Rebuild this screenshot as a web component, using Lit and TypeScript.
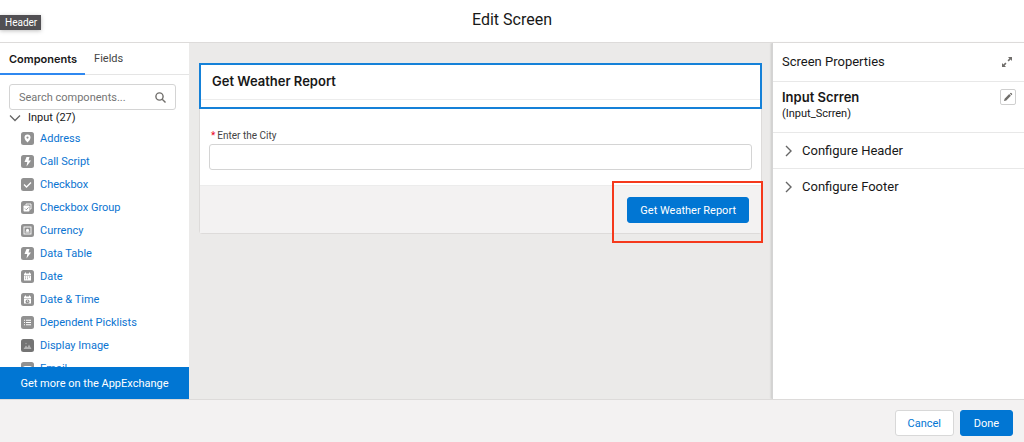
import { LitElement, html, svg, css } from "lit";
import { customElement, property, state } from "lit/decorators.js";

const glyphs: Record<string, unknown> = {
  pin: svg`<path fill-rule="evenodd" fill="#fff" d="M13 5a6 6 0 0 0-6 6c0 4 4 8 6 10 2-2 6-6 6-10a6 6 0 0 0-6-6Zm0 4a2.200 2.200 0 1 1 0 4.400 2.200 2.200 0 0 1 0-4.400Z"/>`,
  bolt: svg`<path fill="#fff" d="M11 4h6l-2 7h5l-9 12 1.500-9H7Z"/>`,
  check: svg`<path fill="none" stroke="#fff" stroke-width="2.600" d="m6 13 5 5 9-9"/>`,
  group: svg`<path fill="none" stroke="#fff" stroke-width="1.800" d="M10 8V6h10v10h-2"/><rect x="5" y="9" width="12" height="12" rx="1.500" fill="#fff"/><path fill="none" stroke="#919191" stroke-width="1.800" d="m8 15 2.500 2.500L15 13"/>`,
  currency: svg`<rect x="6" y="6" width="14" height="14" fill="none" stroke="#fff" stroke-width="1.800"/><circle cx="13" cy="12.500" r="3" fill="#fff"/><path fill="#fff" d="M9 15h8v2H9z"/>`,
  date: svg`<path fill="#fff" d="M6 7h2V5h2v2h6V5h2v2h2v3H6zM6 11h14v10H6z"/><path stroke="#919191" stroke-width="1.600" stroke-dasharray="2 2" d="M8 14h10M8 17.500h6"/>`,
  time: svg`<path fill="#fff" d="M6 7h2V5h2v2h6V5h2v2h2v3H6zM6 11h14v10H6z"/><circle cx="13" cy="17" r="4" fill="#919191"/><path fill="none" stroke="#fff" stroke-width="1.400" d="M13 14.500V17l2 1"/>`,
  list: svg`<path fill="none" stroke="#fff" stroke-width="2" d="M6 8.500h2M10 8.500h10M6 13h2M10 13h10M6 17.500h2M10 17.500h10"/>`,
  image: svg`<path fill="#b4b4b4" d="m5 20 5-7 3 4 3-6 5 9Z"/><circle cx="10" cy="9" r="1.500" fill="#a4a4a4"/>`,
  mail: svg`<path fill="#fff" d="M5 8h16v11H5z"/><path fill="none" stroke="#919191" stroke-width="1.500" d="m5 9 8 6 8-6"/>`,
};

const components = [
  ["Address", "pin"],
  ["Call Script", "bolt"],
  ["Checkbox", "check"],
  ["Checkbox Group", "group"],
  ["Currency", "currency"],
  ["Data Table", "bolt"],
  ["Date", "date"],
  ["Date & Time", "time"],
  ["Dependent Picklists", "list"],
  ["Display Image", "image"],
  ["Email", "mail"],
];

const base = css`
  * { box-sizing: border-box; }
  :host {
    display: block;
    font-family: Roboto, "Liberation Sans", sans-serif;
    color: #181818;
  }
  button, input { font: inherit; color: inherit; margin: 0; padding: 0; }
  button { border: 0; background: none; cursor: pointer; }
  h1, h2, h3, p, ul { margin: 0; padding: 0; font-weight: 400; }
  svg { display: block; flex: none; }
`;

const buttons = css`
  .btn {
    height: 26px;
    min-width: 53px;
    padding: 1px 12px 0;
    border: 1px solid #0176d3;
    border-radius: 3px;
    font-size: 11px;
    line-height: 16px;
    white-space: nowrap;
  }
  .brand { background: #0176d3; color: #fff; }
  .neutral { background: #fff; border-color: #d8d8d8; color: #0176d3; }
`;

@customElement("component-palette")
class ComponentPalette extends LitElement {
  @state() tab = "Components";

  static styles = [base, css`
    :host { display: flex; flex-direction: column; min-height: 0; background: #fff; }
    .tabs { display: flex; height: 32px; flex: none; border-bottom: 1px solid #e5e5e5; }
    .tab { padding: 2px 8px 0 9px; font-size: 11px; line-height: 16px; color: #444; height: 32px; border-bottom: 2px solid transparent; }
    .tab.active { font-family: Inter, sans-serif; font-weight: 600; color: #181818; border-color: #2f88f0; }
    .search { display: flex; align-items: center; flex: none; height: 26px; margin: 9px 13px 0 9px; padding: 0 9px; border: 1px solid #d4d4d4; border-radius: 3px; }
    .search input { flex: 1; min-width: 0; border: 0; outline: 0; font-size: 11px; background: none; }
    .search input::placeholder { color: #757575; opacity: 1; }
    .list { flex: 1; min-height: 0; overflow: hidden; }
    .section { display: flex; align-items: center; gap: 7px; height: 16px; padding-left: 9px; font-size: 11px; line-height: 16px; }
    ul { list-style: none; padding-top: 1px; }
    li { display: flex; align-items: center; gap: 6px; height: 23px; padding-left: 21px; }
    a { color: #0b74d1; font-size: 11px; line-height: 16px; text-decoration: none; }
    .more { flex: none; height: 32px; background: #0176d3; color: #fff; font-size: 11px; line-height: 34px; text-align: center; }
  `];

  render() {
    return html`
      <div class="tabs" role="tablist">
        ${["Components", "Fields"].map((t) => html`
          <button role="tab" aria-selected=${t === this.tab} class="tab ${t === this.tab ? "active" : ""}"
            @click=${() => (this.tab = t)}>${t}</button>`)}
      </div>
      <div class="search">
        <input type="text" aria-label="Search components" placeholder="Search components..." />
        <svg width="11" height="11" viewBox="0 0 11 11" fill="none" stroke="#706e6b" stroke-width="1.400"><circle cx="4.500" cy="4.500" r="3.600"/><path d="m7.200 7.200 3.300 3.300"/></svg>
      </div>
      <div class="list">
        <button class="section" aria-expanded="true">
          <svg width="12" height="12" viewBox="0 0 12 12" fill="none" stroke="#666" stroke-width="1.300"><path d="m1 3.500 5 5 5-5"/></svg>
          Input (27)
        </button>
        <ul>
          ${components.map(([name, icon]) => html`
            <li>
              <svg width="13" height="13" viewBox="0 0 26 26"><rect width="26" height="26" rx="5" fill=${icon === "image" ? "#747474" : "#919191"}/>${glyphs[icon]}</svg>
              <a href="#">${name}</a>
            </li>`)}
        </ul>
      </div>
      <a class="more" href="#">Get more on the AppExchange</a>`;
  }
}

@customElement("screen-canvas")
class ScreenCanvas extends LitElement {
  static styles = [base, buttons, css`
    :host { background: #ebeae9; padding: 20px 10px; }
    .card { background: #fff; border: 1px solid #dddbda; border-radius: 3px; }
    .head { margin: -1px; height: 46px; border: 2px solid #1581d8; padding-top: 4px; }
    .head h2 { height: 31px; padding-left: 11px; border-bottom: 1px solid #ececec; font-family: Inter, sans-serif; font-size: 13px; line-height: 24px; font-weight: 600; }
    .field { padding: 20px 9px 15px; }
    label { display: flex; gap: 2px; padding-left: 2px; font-size: 10px; line-height: 16px; color: #444; }
    .required { color: #ea001e; }
    .field input { display: block; width: 100%; height: 26px; border: 1px solid #d4d4d4; border-radius: 3px; padding: 0 8px; font-size: 11px; }
    .foot { display: flex; justify-content: flex-end; padding: 11px 12px 10px; background: #f3f2f2; border-top: 1px solid #ececec; }
    .callout { position: relative; }
    .callout::after { content: ""; position: absolute; inset: -16px -14px -20px -15px; border: 2px solid #f5391c; pointer-events: none; }
  `];

  render() {
    return html`
      <section class="card">
        <header class="head"><h2>Get Weather Report</h2></header>
        <div class="field">
          <label for="city"><span class="required">*</span>Enter the City</label>
          <input id="city" type="text" required />
        </div>
        <footer class="foot"><div class="callout"><button class="btn brand">Get Weather Report</button></div></footer>
      </section>`;
  }
}

@customElement("screen-properties")
class ScreenProperties extends LitElement {
  @property() name = "Input Scrren";
  @property() api = "Input_Scrren";

  static styles = [base, css`
    :host { background: #fff; border-left: 1px solid #d4d4d4; box-shadow: -1px 0 2px #00000026; }
    .title { display: flex; align-items: center; justify-content: space-between; height: 39px; padding: 0 11px 0 9px; border-bottom: 1px solid #e8e8e8; }
    .title h2 { font-size: 13px; line-height: 20px; }
    .expand { display: flex; }
    .identity { display: flex; justify-content: space-between; align-items: flex-start; height: 51px; padding: 7px 8px 0 9px; border-bottom: 1px solid #e8e8e8; }
    h3 { font-family: Inter, sans-serif; font-size: 13px; line-height: 17px; font-weight: 600; }
    p { font-size: 11px; line-height: 16px; }
    .edit { display: grid; place-items: center; width: 16px; height: 16px; border: 1px solid #cfcfcf; border-radius: 2px; }
    .section { box-sizing: content-box; display: flex; align-items: center; gap: 8px; height: 35px; padding-left: 10px; font-size: 13px; line-height: 20px; }
    .sections { display: flex; flex-direction: column; }
    .section + .section { border-top: 1px solid #e8e8e8; }
  `];

  render() {
    return html`
      <div class="title">
        <h2>Screen Properties</h2>
        <button class="expand" aria-label="Expand">
          <svg width="12" height="12" viewBox="0 0 12 12"><path fill="#706e6b" d="M7 1h4v4L9.600 3.600 7.700 5.500l-1.200-1.200 1.900-1.900ZM5 11H1V7l1.400 1.400 1.900-1.900 1.200 1.200-1.900 1.900Z"/></svg>
        </button>
      </div>
      <div class="identity">
        <div><h3>${this.name}</h3><p>(${this.api})</p></div>
        <button class="edit" aria-label="Edit">
          <svg width="10" height="10" viewBox="0 0 10 10" fill="#706e6b"><path d="M1 9l.6-2.300L6.200 2.100l1.700 1.700-4.600 4.600ZM6.800 1.500l.7-.6q.4-.3.8 0l.8.8q.3.4 0 .8l-.6.7Z"/></svg>
        </button>
      </div>
      <div class="sections">
        ${["Configure Header", "Configure Footer"].map((s) => html`
          <button class="section" aria-expanded="false">
            <svg width="11" height="12" viewBox="0 0 11 12" fill="none" stroke="#666" stroke-width="1.400"><path d="m3 1 5 5-5 5"/></svg>
            ${s}
          </button>`)}
      </div>`;
  }
}

@customElement("app-root")
class AppRoot extends LitElement {
  static styles = [base, buttons, css`
    :host { display: flex; flex-direction: column; height: 100vh; background: #fff; }
    .top { position: relative; flex: none; padding: 8px 0 10px; border-bottom: 1px solid #dddbda; text-align: center; }
    h1 { font-size: 16px; line-height: 24px; }
    .tip { position: absolute; left: 0; top: 15px; padding: 0 4px 0 5px; background: #514f53; color: #fff; font-size: 10px; line-height: 15px; box-shadow: 0 1px 4px #00000040; }
    .body { flex: 1; min-height: 0; display: grid; grid-template-columns: 189px 1fr 252px; grid-template-rows: minmax(0, 1fr); }
    .bottom { flex: none; display: flex; justify-content: flex-end; gap: 6px; padding: 10px 11px 6px; background: #f3f2f2; border-top: 1px solid #dddbda; }
  `];

  render() {
    return html`
      <header class="top"><h1>Edit Screen</h1><span class="tip" role="tooltip">Header</span></header>
      <main class="body">
        <component-palette></component-palette>
        <screen-canvas></screen-canvas>
        <screen-properties></screen-properties>
      </main>
      <footer class="bottom">
        <button class="btn neutral">Cancel</button>
        <button class="btn brand">Done</button>
      </footer>`;
  }
}
